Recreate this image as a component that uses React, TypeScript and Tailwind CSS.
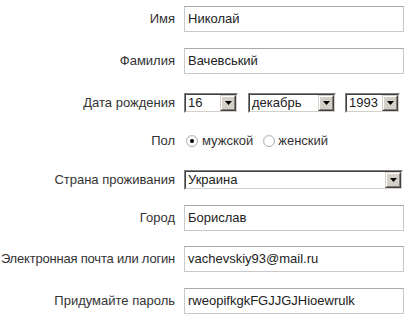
import React from "react";

function TextInput({ value }: { value: string }) {
  return (
    <div className="flex h-[26px] w-[220px] items-center border border-[#c9c9c9] border-t-[#a9a9a9] bg-white pl-[3px] text-[13px] text-[#222]">
      {value}
    </div>
  );
}

function Arrow() {
  return (
    <div className="flex h-[16px] w-[16px] border border-t-[#d4d0c8] border-l-[#d4d0c8] border-b-[#404040] border-r-[#404040]">
      <div className="flex flex-1 items-center justify-center border border-t-white border-l-white border-b-[#808080] border-r-[#808080] bg-[#d4d0c8]">
        <svg width="7" height="4" viewBox="0 0 7 4">
          <path d="M0 0H7L3.5 4Z" fill="#000" />
        </svg>
      </div>
    </div>
  );
}

function Select({ value, width }: { value: string; width: string }) {
  return (
    <div className={`flex h-[20px] ${width} border border-t-[#808080] border-l-[#808080] border-b-white border-r-white`}>
      <div className="flex flex-1 items-center border border-t-[#404040] border-l-[#404040] border-b-[#d4d0c8] border-r-[#d4d0c8] bg-white">
        <span className="flex-1 pl-[2px] text-[13px] leading-[16px] text-[#222]">{value}</span>
        <Arrow />
      </div>
    </div>
  );
}

function Radio({ checked }: { checked: boolean }) {
  return (
    <svg width="12" height="12" viewBox="0 0 12 12">
      <circle cx="6" cy="6" r="5.5" fill="#fff" stroke="#a8a8a8" />
      <path d="M2.2 9.8A5 5 0 0 1 9.8 2.2" fill="none" stroke="#d0d0d0" strokeWidth="1" />
      {checked && <circle cx="6" cy="6" r="2" fill="#000" />}
    </svg>
  );
}

function Row({ label, mt, tight, children }: { label: string; mt: string; tight?: boolean; children: React.ReactNode }) {
  return (
    <div className={`flex items-center ${mt}`}>
      <div className={`w-[175px] shrink-0 whitespace-nowrap text-right text-[13px] text-[#333] ${tight ? "tracking-[-0.2px]" : ""}`}>{label}</div>
      <div className="ml-[9px] flex items-center">{children}</div>
    </div>
  );
}

export default function App() {
  return (
    <div className="h-[320px] w-[413px] overflow-hidden bg-white font-['Liberation_Sans',Arial,sans-serif] text-[13px] pt-[6px]">
      <Row label="Имя" mt="mt-0">
        <TextInput value="Николай" />
      </Row>
      <Row label="Фамилия" mt="mt-[16px]">
        <TextInput value="Вачевський" />
      </Row>
      <Row label="Дата рождения" mt="mt-[19px]">
        <div className="flex items-center">
          <Select value="16" width="w-[54px]" />
          <div className="ml-[10px]">
            <Select value="декабрь" width="w-[88px]" />
          </div>
          <div className="ml-[9px]">
            <Select value="1993" width="w-[55px]" />
          </div>
        </div>
      </Row>
      <Row label="Пол" mt="mt-[18px]">
        <div className="flex h-[14px] items-center text-[13px] text-[#333]">
          <span className="ml-[2px] flex"><Radio checked /></span>
          <span className="ml-[4px]">мужской</span>
          <span className="ml-[10px] flex"><Radio checked={false} /></span>
          <span className="ml-[3px]">женский</span>
        </div>
      </Row>
      <Row label="Страна проживания" mt="mt-[19px]">
        <Select value="Украина" width="w-[219px]" />
      </Row>
      <Row label="Город" mt="mt-[15px]">
        <TextInput value="Борислав" />
      </Row>
      <Row label="Электронная почта или логин" mt="mt-[15px]" tight>
        <TextInput value="vachevskiy93@mail.ru" />
      </Row>
      <Row label="Придумайте пароль" mt="mt-[16px]">
        <TextInput value="rweopifkgkFGJJGJHioewrulk" />
      </Row>
    </div>
  );
}
